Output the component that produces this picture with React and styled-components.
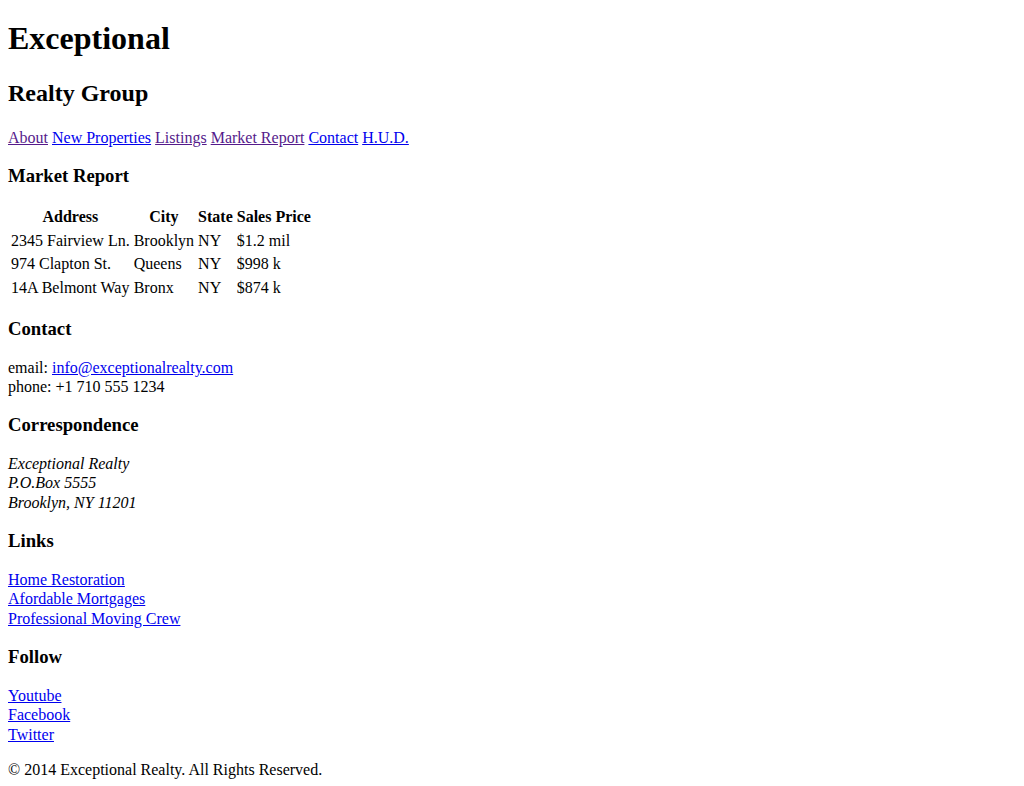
import React from "react";
import styled, { createGlobalStyle } from "styled-components";

const GlobalStyle = createGlobalStyle`
  body {
    margin: 0;
    background: #ffffff;
    color: #000000;
    font-family: "Liberation Serif", "Times New Roman", serif;
    font-size: 16px;
    line-height: 1.22;
  }
`;

const navItems = [
  { label: "About", visited: true },
  { label: "New Properties" },
  { label: "Listings", visited: true },
  { label: "Market Report", visited: true },
  { label: "Contact" },
  { label: "H.U.D." },
];

const sales = [
  ["2345 Fairview Ln.", "Brooklyn", "NY", "$1.2 mil"],
  ["974 Clapton St.", "Queens", "NY", "$998 k"],
  ["14A Belmont Way", "Bronx", "NY", "$874 k"],
];

function App() {
  return (
    <Page>
      <GlobalStyle />
      <header>
        <Title>Exceptional</Title>
        <Subtitle>Realty Group</Subtitle>
        <Nav>
          {navItems.map((item, i) => (
            <React.Fragment key={item.label}>
              <Link href="#" $visited={item.visited}>
                {item.label}
              </Link>
              {i < navItems.length - 1 ? " " : null}
            </React.Fragment>
          ))}
        </Nav>
      </header>

      <section>
        <SectionTitle>Market Report</SectionTitle>
        <Table>
          <thead>
            <tr>
              <Th>Address</Th>
              <Th>City</Th>
              <Th>State</Th>
              <Th>Sales Price</Th>
            </tr>
          </thead>
          <tbody>
            {sales.map((row) => (
              <tr key={row[0]}>
                {row.map((cell) => (
                  <Td key={cell}>{cell}</Td>
                ))}
              </tr>
            ))}
          </tbody>
        </Table>
      </section>

      <section>
        <SectionTitle>Contact</SectionTitle>
        <div>
          email: <Link href="#">info@exceptionalrealty.com</Link>
          <br />
          phone: +1 710 555 1234
        </div>
      </section>

      <section>
        <SectionTitle>Correspondence</SectionTitle>
        <Address>
          Exceptional Realty
          <br />
          P.O.Box 5555
          <br />
          Brooklyn, NY 11201
        </Address>
      </section>

      <section>
        <SectionTitle>Links</SectionTitle>
        <LinkList>
          <Link href="#">Home Restoration</Link>
          <Link href="#">Afordable Mortgages</Link>
          <Link href="#">Professional Moving Crew</Link>
        </LinkList>
      </section>

      <section>
        <SectionTitle>Follow</SectionTitle>
        <LinkList>
          <Link href="#">Youtube</Link>
          <Link href="#">Facebook</Link>
          <Link href="#">Twitter</Link>
        </LinkList>
      </section>

      <Footer>&copy; 2014 Exceptional Realty. All Rights Reserved.</Footer>
    </Page>
  );
}

export default App;

const Page = styled.div`
  display: flow-root;
  padding: 8px;
`;

const Title = styled.h1`
  font-size: 32px;
  font-weight: bold;
  line-height: 1.25;
  margin: 10px 0 21px;
`;

const Subtitle = styled.h2`
  font-size: 24px;
  font-weight: bold;
  line-height: 1.19;
  margin: 20px 0;
`;

const Nav = styled.nav`
  display: block;
`;

const Link = styled.a`
  color: ${(p) => (p.$visited ? "#551a8b" : "#0000ee")};
  text-decoration: underline;
`;

const SectionTitle = styled.h3`
  font-size: 18.72px;
  font-weight: bold;
  line-height: 1.06;
  margin: 18.72px 0;
`;

const Table = styled.table`
  border-collapse: separate;
  border-spacing: 2px;
`;

const Th = styled.th`
  padding: 1px;
  font-weight: bold;
  text-align: center;
`;

const Td = styled.td`
  padding: 1px;
  text-align: left;
`;

const Address = styled.address`
  font-style: italic;
`;

const LinkList = styled.div`
  display: flex;
  flex-direction: column;
  align-items: flex-start;
`;

const Footer = styled.p`
  margin: 16px 0;
`;
